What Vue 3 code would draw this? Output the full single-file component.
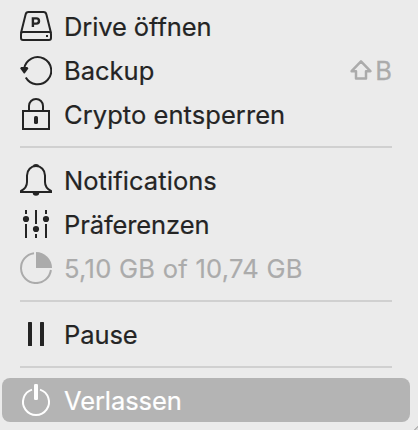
<template>
  <div class="tray-menu">
    <template v-for="(group, index) in groups" :key="index">
      <div v-if="index > 0" class="separator"></div>
      <div
        v-for="item in group"
        :key="item.id"
        class="menu-item"
        :class="[`item-${item.id}`, { disabled: item.disabled, selected: item.id === selectedId }]"
      >
        <svg class="menu-icon" viewBox="0 0 32 32">
          <g v-if="item.id === 'drive'" class="line">
            <path d="M1 23 5.600 4.400C6 2.700 6.800 2 8.400 2h15.200c1.600 0 2.400.7 2.800 2.400L31 23" />
            <rect x="1" y="22" width="30" height="8" rx="2" />
            <path class="letter" d="M12.900 17V8.400h3.500a2.600 2.600 0 0 1 0 5.200h-3.500" />
            <rect class="fill" x="26" y="25" width="2" height="2" />
          </g>
          <g v-else-if="item.id === 'backup'">
            <path class="line" d="M4.200 14.500A13.600 13.600 0 1 1 5.800 23.400" />
            <path class="fill" d="M1 13h6.400l1 1.400-3.700 5.100h-.8L.2 14.400z" />
          </g>
          <g v-else-if="item.id === 'crypto'">
            <path class="line" d="M3 13h26v18H3zM9 13V8a7 7 0 0 1 14 0v5" />
            <rect class="fill" x="14" y="18" width="4" height="8" rx="1.600" />
          </g>
          <g v-else-if="item.id === 'notifications'">
            <path
              class="line"
              d="M1 28v-1c3.800-2 6-4.600 6-9v-6.500C7 6 11 2 16 2s9 4 9 9.500V18c0 4.400 2.200 7 6 9v1z"
            />
            <path class="fill" d="M13 2.200a3 2.200 0 0 1 6 0zM12.700 28.500h6.600a3.300 3.300 0 0 1-6.600 0z" />
          </g>
          <g v-else-if="item.id === 'preferences'">
            <path class="line" d="M6 2v4M6 16v14M16 2v14M16 26v4M26 2v4M26 16v14" />
            <circle class="fill" cx="6" cy="11" r="3.100" />
            <circle class="fill" cx="16" cy="21" r="3.100" />
            <circle class="fill" cx="26" cy="11" r="3.100" />
          </g>
          <g v-else-if="item.id === 'storage'">
            <path class="line" d="M14 1.200A15 15 0 1 0 30.900 18" />
            <path class="fill" d="M16 0a16 16 0 0 1 16 16H16z" />
          </g>
          <g v-else-if="item.id === 'pause'">
            <rect class="fill" x="8" y="4" width="4" height="24" rx="0.600" />
            <rect class="fill" x="20" y="4" width="4" height="24" rx="0.600" />
          </g>
          <g v-else>
            <path class="line" d="M12 5.600a13 13 0 1 0 8 0" />
            <rect class="fill" x="14" y="0" width="4" height="16" rx="1.300" />
          </g>
        </svg>
        <span class="menu-label">{{ item.label }}</span>
        <span v-if="item.shortcut" class="shortcut">
          <svg class="shift-icon" viewBox="0 0 22 20">
            <path d="M11 1.400 20.400 11.200H16V18.600H6V11.200H1.600z" />
          </svg>
          <span class="shortcut-key">{{ item.shortcut }}</span>
        </span>
      </div>
    </template>
    <div class="corner"></div>
  </div>
</template>

<script setup>
import { ref } from 'vue'

const selectedId = ref('quit')

const groups = [
  [
    { id: 'drive', label: 'Drive öffnen' },
    { id: 'backup', label: 'Backup', shortcut: 'B' },
    { id: 'crypto', label: 'Crypto entsperren' }
  ],
  [
    { id: 'notifications', label: 'Notifications' },
    { id: 'preferences', label: 'Präferenzen' },
    { id: 'storage', label: '5,10 GB of 10,74 GB', disabled: true }
  ],
  [{ id: 'pause', label: 'Pause' }],
  [{ id: 'quit', label: 'Verlassen' }]
]
</script>

<style>
body {
  margin: 0;
  background: #ebebeb;
}
</style>

<style scoped>
.tray-menu {
  position: relative;
  box-sizing: border-box;
  width: 418px;
  height: 430px;
  padding: 4px 8px 8px 2px;
  overflow: hidden;
  background: #ebebeb;
  color: #242424;
  font-family: Inter, 'Liberation Sans', sans-serif;
  font-size: 25.5px;
  user-select: none;
}

.menu-item {
  display: flex;
  align-items: center;
  box-sizing: border-box;
  height: 44px;
  padding: 0 18px;
  border-radius: 8px;
}

.menu-item.disabled {
  color: #ababab;
}

.menu-item.selected {
  background: #b4b4b4;
  color: #fff;
}

.menu-icon {
  flex: none;
  width: 32px;
  height: 32px;
  margin-right: 12px;
}

.menu-label {
  padding-top: 2px;
  line-height: 42px;
  white-space: nowrap;
  -webkit-text-stroke: 0.2px currentColor;
}

.item-drive .menu-label,
.item-preferences .menu-label,
.item-pause .menu-label,
.item-quit .menu-label {
  letter-spacing: -0.1px;
}

.item-crypto .menu-label,
.item-notifications .menu-label {
  letter-spacing: 0.06px;
}

.item-storage .menu-label {
  letter-spacing: 0.28px;
}

.line {
  fill: none;
  stroke: currentColor;
  stroke-width: 2;
}

.letter {
  stroke-width: 2.4;
}

.fill {
  fill: currentColor;
  stroke: none;
}

.shortcut {
  display: flex;
  align-items: center;
  gap: 3px;
  margin-left: auto;
  color: #ababab;
}

.shortcut-key {
  -webkit-text-stroke: 0.3px currentColor;
}

.shift-icon {
  width: 22px;
  height: 20px;
  fill: none;
  stroke: currentColor;
  stroke-width: 2.5;
  stroke-linejoin: round;
}

.separator {
  height: 2px;
  margin: 10px 18px;
  background: #d0d0d0;
}

.corner {
  position: absolute;
  right: 0;
  bottom: 0;
  width: 4px;
  height: 4px;
  background: linear-gradient(135deg, transparent 48%, #b8b8b8 50%, #b8b8b8 66%, #dedede 68%);
}
</style>
